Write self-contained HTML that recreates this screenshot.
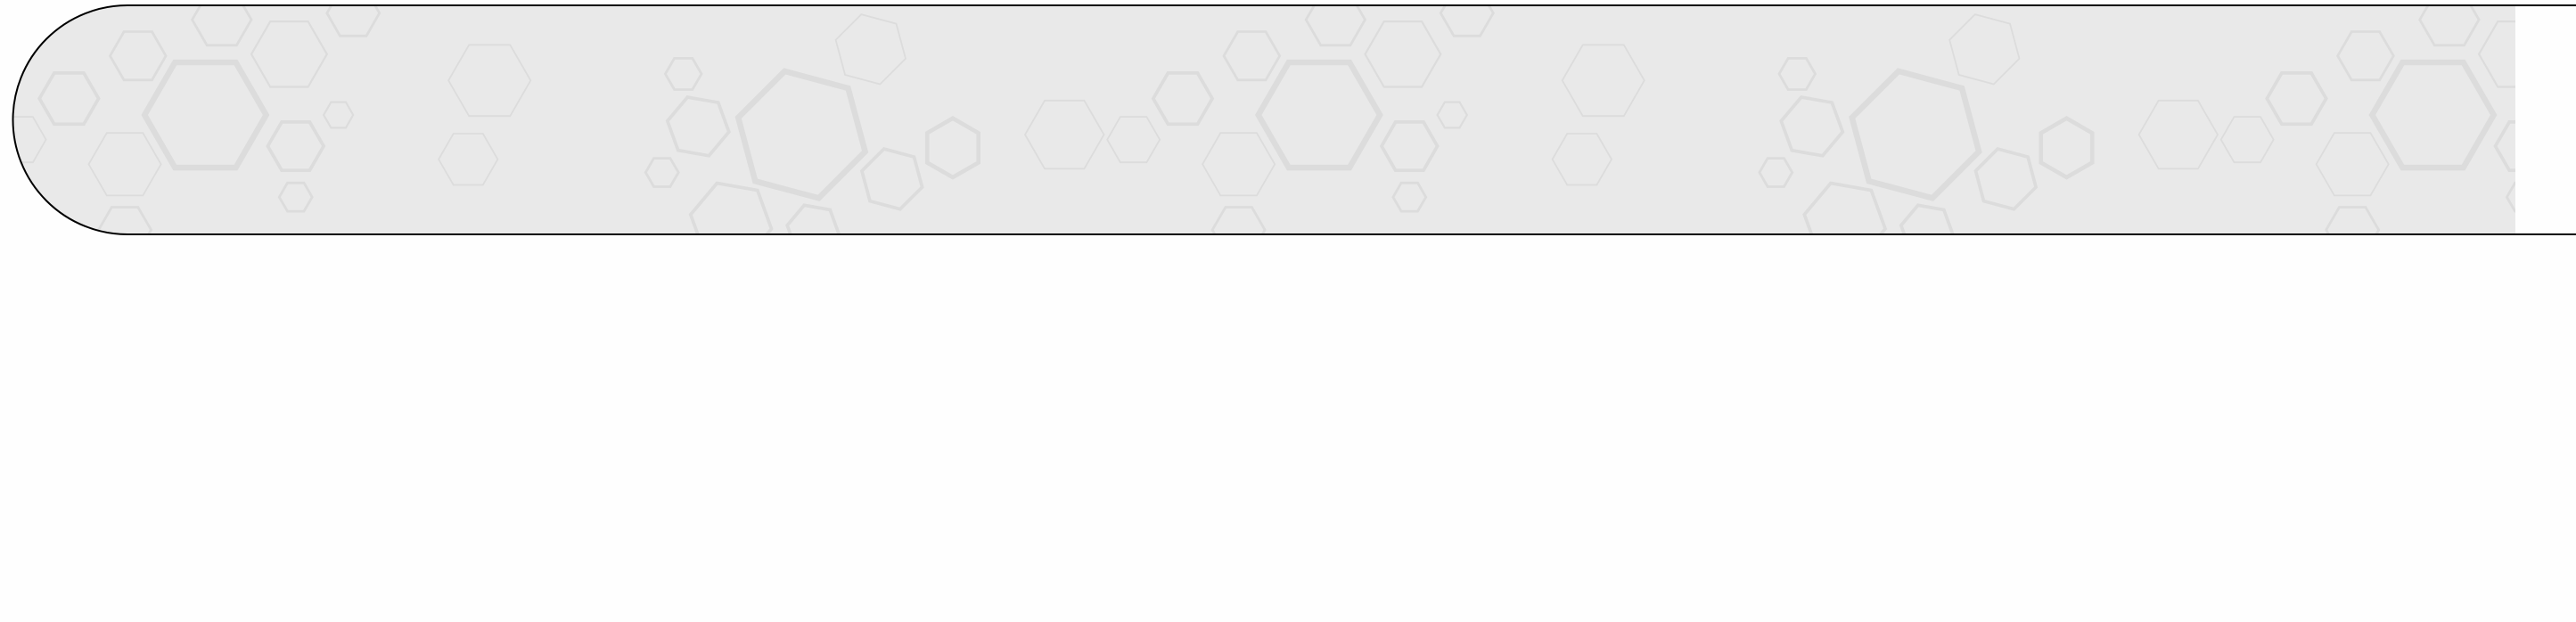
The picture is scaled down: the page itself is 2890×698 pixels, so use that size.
<!DOCTYPE html>
<html><head><meta charset="utf-8"><style>
html,body{margin:0;padding:0;background:#fefefe;}
body{width:2890px;height:698px;overflow:hidden;}
svg{display:block}
</style></head><body>
<svg id="s" width="2890" height="698" viewBox="0 0 2890 698" xmlns="http://www.w3.org/2000/svg">
<defs>
<clipPath id="c"><path d="M143,6 H2822 V263 H143 A128.5,128.5 0 0 1 143,6 Z"/></clipPath>
</defs>
<g clip-path="url(#c)">
<rect x="0" y="0" width="2822" height="270" fill="#e9e9e9"/>
<g id="hexes" fill="none" stroke="#dcdcdc"></g>
</g>
<path d="M2890,6 H143 A128.5,128.5 0 0 0 143,263 H2890" fill="none" stroke="#000" stroke-width="2"/>
</svg>
<script>
var k=1.843, P=678;
// [cx, cy, r, strokeWidth, rotationDeg] in displayed coords
var H=[
[125,70,37,3.5,0],[176,33,23,1.2,0],[180,89,17,2,0],[84,34,17,1.5,0],[76,100,22,1,0],
[298,49,25,1,0],[285,97,18,1,0],[416,45,11,1.5,0],[425,77,19,2,10],[488,82,40,3.5,15],
[543,109,19,2,15],[648,82,24,1,0],[403,105,10,1.5,0],[206,70,9,1.2,0],[180,120,10,1.5,0],
[135,12,18,1.5,0],[215,8,16,1.5,0],[42,60,18,2,0],[12,85,16,1,0],[76,140,16,1.5,0],
[445,135,25,2,10],[495,140,16,2,10],[530,30,22,1,15],[580,90,18,2.5,30]
];
var g=document.getElementById('hexes'),out='';
for(var t=-1;t<4;t++){
 for(var i=0;i<H.length;i++){
  var h=H[i],cx=(h[0]+t*P)*k,cy=h[1]*k,r=h[2]*k,rot=h[4]*Math.PI/180,pts=[];
  for(var j=0;j<6;j++){var a=j*Math.PI/3+rot;pts.push((cx+r*Math.cos(a)).toFixed(1)+','+(cy+r*Math.sin(a)).toFixed(1));}
  out+='<polygon points="'+pts.join(' ')+'" stroke-width="'+(h[3]*k).toFixed(1)+'"/>';
 }
}
g.innerHTML=out;
</script>
</body></html>
